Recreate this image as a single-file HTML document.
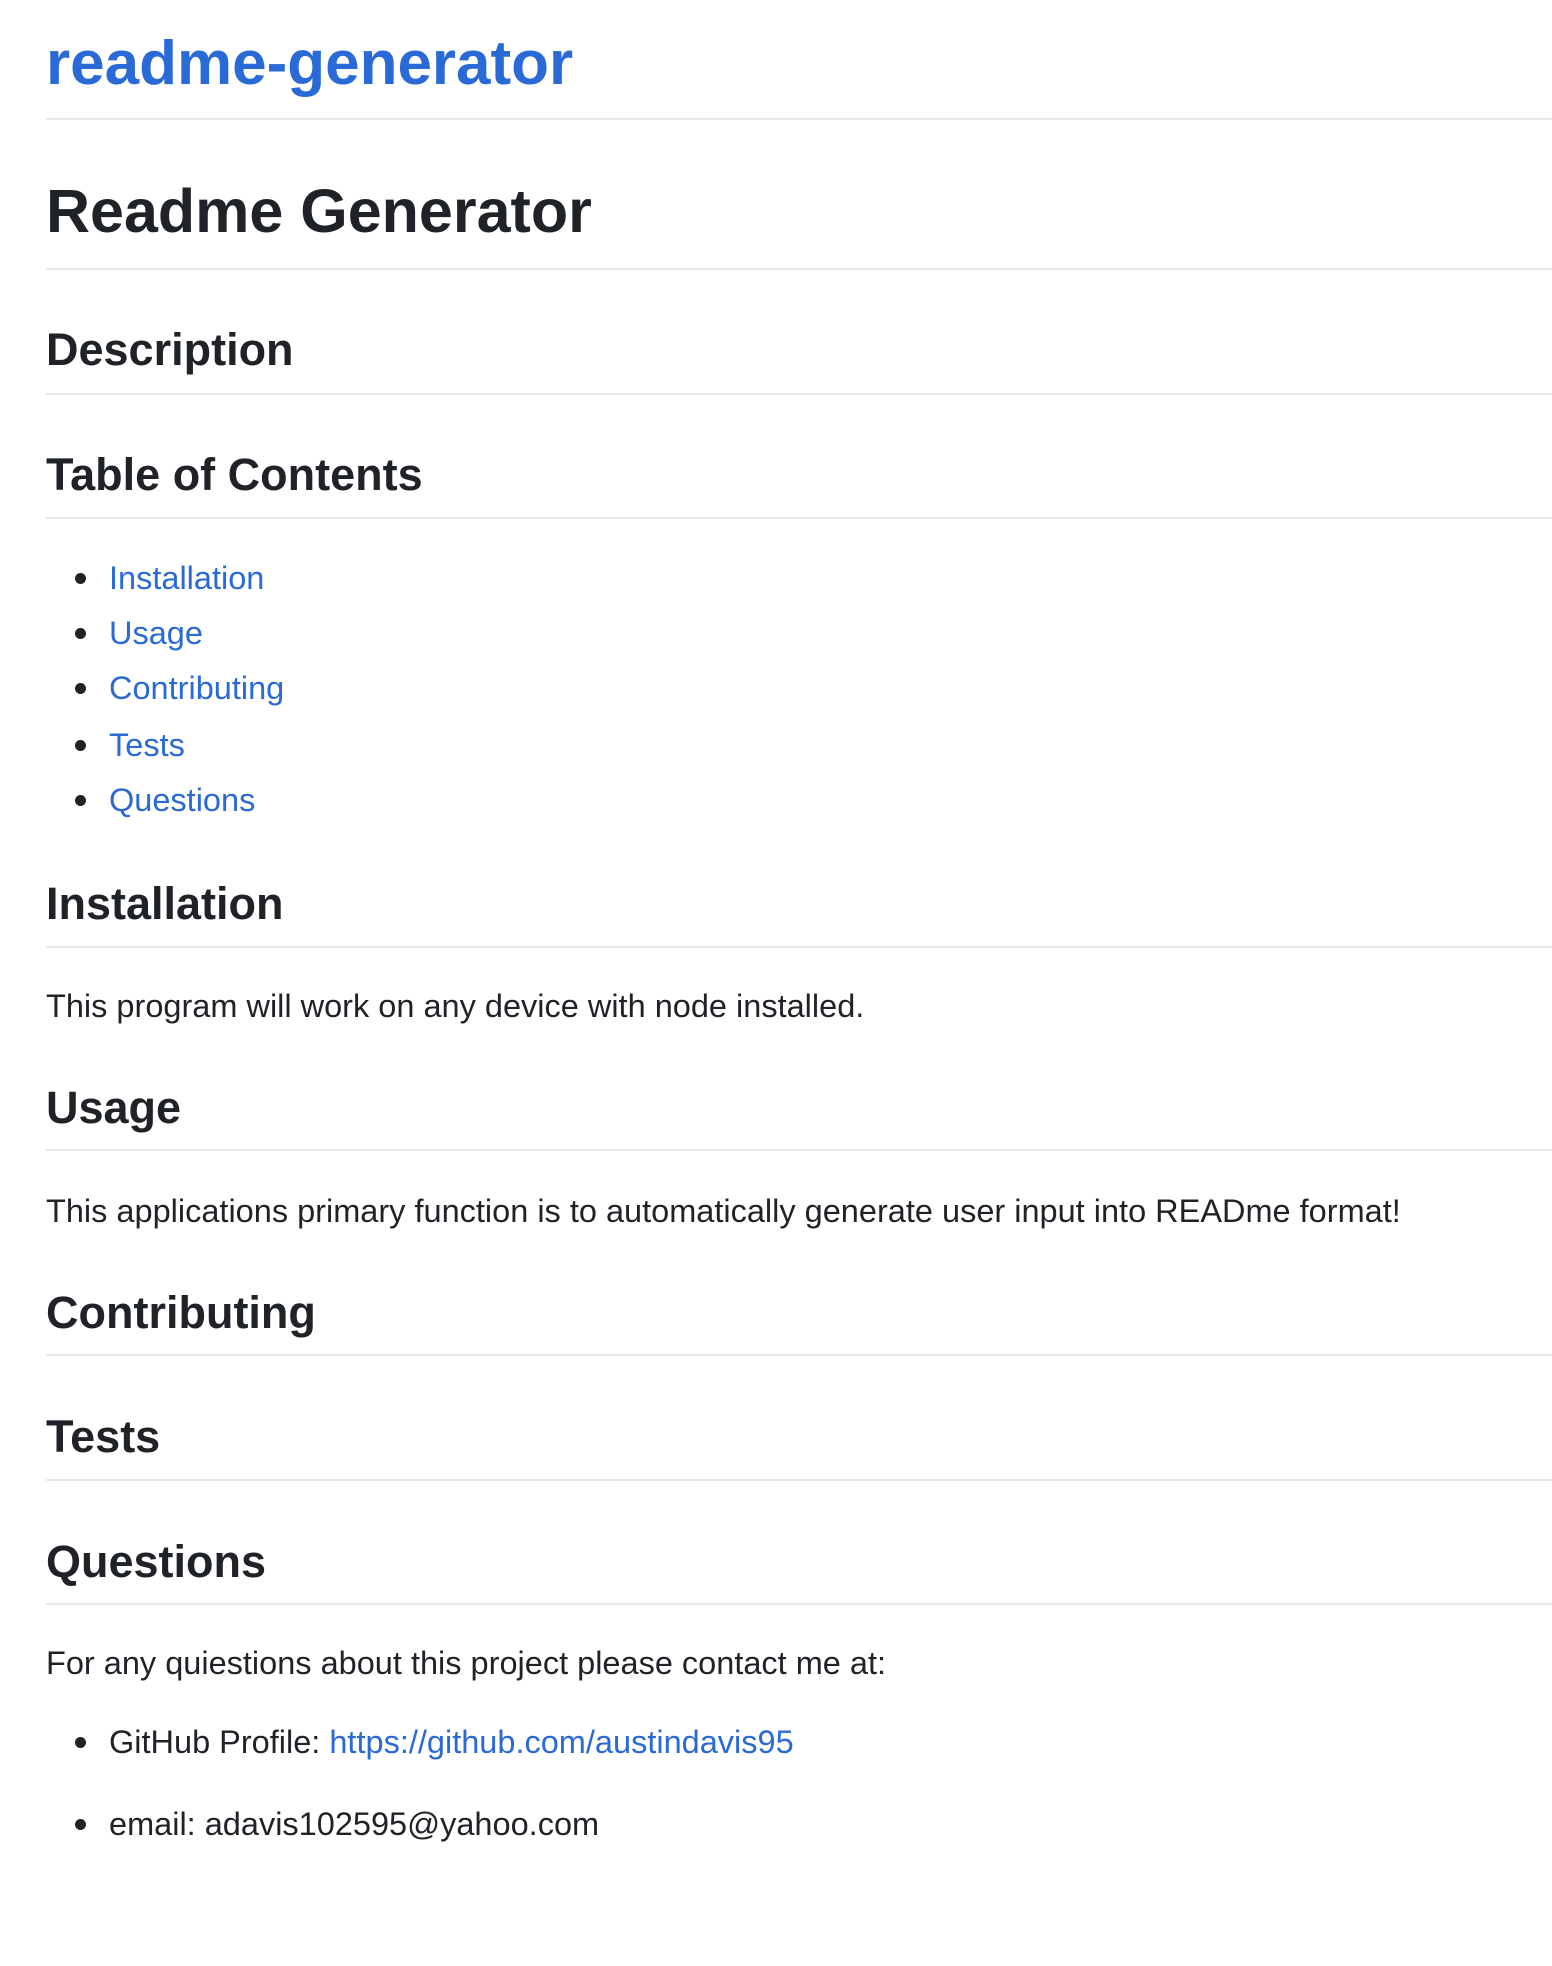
<!DOCTYPE html>
<html><head><meta charset="utf-8"><style>
*{margin:0;padding:0;box-sizing:border-box}
html,body{width:1552px;height:1966px;background:#fff;overflow:hidden}
body{position:relative;font-family:"Liberation Sans",Arial,sans-serif;color:#1f2328}
.t{position:absolute;left:46px;white-space:nowrap}
.h1{font-size:61px;font-weight:bold;line-height:70px;height:70px}
.h2{font-size:45px;font-weight:bold;line-height:54px;height:54px}
.p{font-size:32.5px;line-height:40px;height:40px}
.hr{position:absolute;left:46px;width:1506px;height:2px;background:#e4e7eb}
a{color:#2a6ad6;text-decoration:none}
.li{left:109px}
.b{position:absolute;left:75px;width:11px;height:11px;border-radius:50%;background:#1f2328}
</style></head><body>
<div class="t h1" style="top:29px;font-size:62px"><a>readme-generator</a></div>
<div class="hr" style="top:118px"></div>
<div class="t h1" style="top:176px">Readme Generator</div>
<div class="hr" style="top:268px"></div>
<div class="t h2" style="top:323px">Description</div>
<div class="hr" style="top:393px"></div>
<div class="t h2" style="top:448px">Table of Contents</div>
<div class="hr" style="top:517px"></div>

<div class="b" style="top:573px"></div><div class="t p li" style="top:558px"><a>Installation</a></div>
<div class="b" style="top:628px"></div><div class="t p li" style="top:613px"><a>Usage</a></div>
<div class="b" style="top:683px"></div><div class="t p li" style="top:668px"><a>Contributing</a></div>
<div class="b" style="top:740px"></div><div class="t p li" style="top:725px"><a>Tests</a></div>
<div class="b" style="top:795px"></div><div class="t p li" style="top:780px"><a>Questions</a></div>

<div class="t h2" style="top:877px">Installation</div>
<div class="hr" style="top:946px"></div>
<div class="t p" style="top:986px">This program will work on any device with node installed.</div>
<div class="t h2" style="top:1081px">Usage</div>
<div class="hr" style="top:1149px"></div>
<div class="t p" style="top:1191px">This applications primary function is to automatically generate user input into READme format!</div>
<div class="t h2" style="top:1286px">Contributing</div>
<div class="hr" style="top:1354px"></div>
<div class="t h2" style="top:1410px">Tests</div>
<div class="hr" style="top:1479px"></div>
<div class="t h2" style="top:1535px">Questions</div>
<div class="hr" style="top:1603px"></div>
<div class="t p" style="top:1643px">For any quiestions about this project please contact me at:</div>
<div class="b" style="top:1737px"></div><div class="t p li" style="top:1722px">GitHub Profile: <a>https://github.com/austindavis95</a></div>
<div class="b" style="top:1819px"></div><div class="t p li" style="top:1804px">email: adavis102595@yahoo.com</div>
</body></html>
